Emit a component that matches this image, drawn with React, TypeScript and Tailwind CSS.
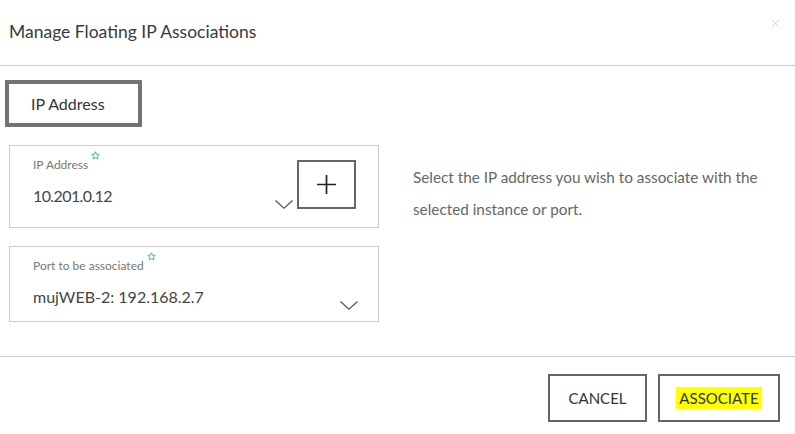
import React from 'react';

const Star: React.FC = () => (
  <svg viewBox="0 0 10 10" className="w-[9px] h-[9px]" fill="none" stroke="#2fb58f" strokeWidth="1">
    <path d="M5 0.8 L6.2 3.6 L9.2 3.8 L6.9 5.8 L7.6 8.9 L5 7.3 L2.4 8.9 L3.1 5.8 L0.8 3.8 L3.8 3.6 Z" />
  </svg>
);

const Chevron: React.FC = () => (
  <svg viewBox="0 0 18 9" className="w-[18px] h-[9px]" fill="none" stroke="#555" strokeWidth="1.2">
    <path d="M0.5 0.5 L9 8.2 L17.5 0.5" />
  </svg>
);

interface FieldProps {
  label: string;
  value: string;
  height: string;
  valueClass?: string;
}

const SelectField: React.FC<FieldProps & { children?: React.ReactNode }> = ({ label, value, height, valueClass, children }) => (
  <div className={`relative border border-[#cccccc] ${height} pl-[23px] pt-[6px]`}>
    <div className="flex items-start">
      <span className="text-[12px] text-[#777] leading-[16px] mt-[5px]">{label}</span>
      <span className="ml-[3px] mt-[-1px]"><Star /></span>
    </div>
    <div className={`text-[16px] text-[#444] mt-[12px] leading-[22px] ${valueClass ?? ''}`}>{value}</div>
    {children}
  </div>
);

export default function App() {
  return (
    <div className="w-[795px] h-[434px] bg-white overflow-hidden text-[#333]" style={{ fontFamily: 'Lato, "Open Sans", sans-serif' }}>
      <div className="relative h-[66px] border-b border-[#cccccc] flex items-center pl-[9px]">
        <h1 className="text-[17.5px] text-[#3a3a3a] font-normal">Manage Floating IP Associations</h1>
        <svg viewBox="0 0 10 10" className="absolute left-[771px] top-[19px] w-[9px] h-[9px]" stroke="#cfcfcf" strokeWidth="1">
          <path d="M1 1 L9 9 M9 1 L1 9" />
        </svg>
      </div>

      <div className="h-[290px] pt-[14px]">
        <div className="ml-[5px] w-[137px] h-[47px] border-[4px] border-[#737373] flex items-center pl-[22px] text-[16px] text-[#333]">
          IP Address
        </div>

        <div className="flex mt-[18px]">
          <div className="ml-[9px] w-[370px] flex flex-col gap-[18px]">
            <SelectField label="IP Address" value="10.201.0.12" height="h-[83px]" valueClass="tracking-[-0.6px]">
              <div className="absolute left-[265px] top-[54px]"><Chevron /></div>
              <button className="absolute left-[287px] top-[14px] w-[59px] h-[49px] border-2 border-[#666] flex items-center justify-center">
                <svg viewBox="0 0 20 20" className="w-[19px] h-[19px]" stroke="#222" strokeWidth="1.8">
                  <path d="M10 0 V20 M0 10 H20" />
                </svg>
              </button>
            </SelectField>
            <SelectField label="Port to be associated" value="mujWEB-2: 192.168.2.7" height="h-[76px]">
              <div className="absolute left-[330px] top-[54px]"><Chevron /></div>
            </SelectField>
          </div>
          <p className="ml-[34px] mt-[16px] w-[370px] text-[15.3px] leading-[32px] text-[#666]">
            Select the IP address you wish to associate with the selected instance or port.
          </p>
        </div>
      </div>

      <div className="border-t border-[#cccccc] flex justify-end gap-[11px] pr-[15px] pt-[17px]">
        <button className="w-[99px] h-[48px] border-2 border-[#666] text-[15px] text-[#333] flex items-center justify-center">
          CANCEL
        </button>
        <button className="w-[122px] h-[48px] border-2 border-[#666] text-[15px] text-[#333] flex items-center justify-center">
          <span className="bg-[#ffff00] px-[3px]">ASSOCIATE</span>
        </button>
      </div>
    </div>
  );
}
